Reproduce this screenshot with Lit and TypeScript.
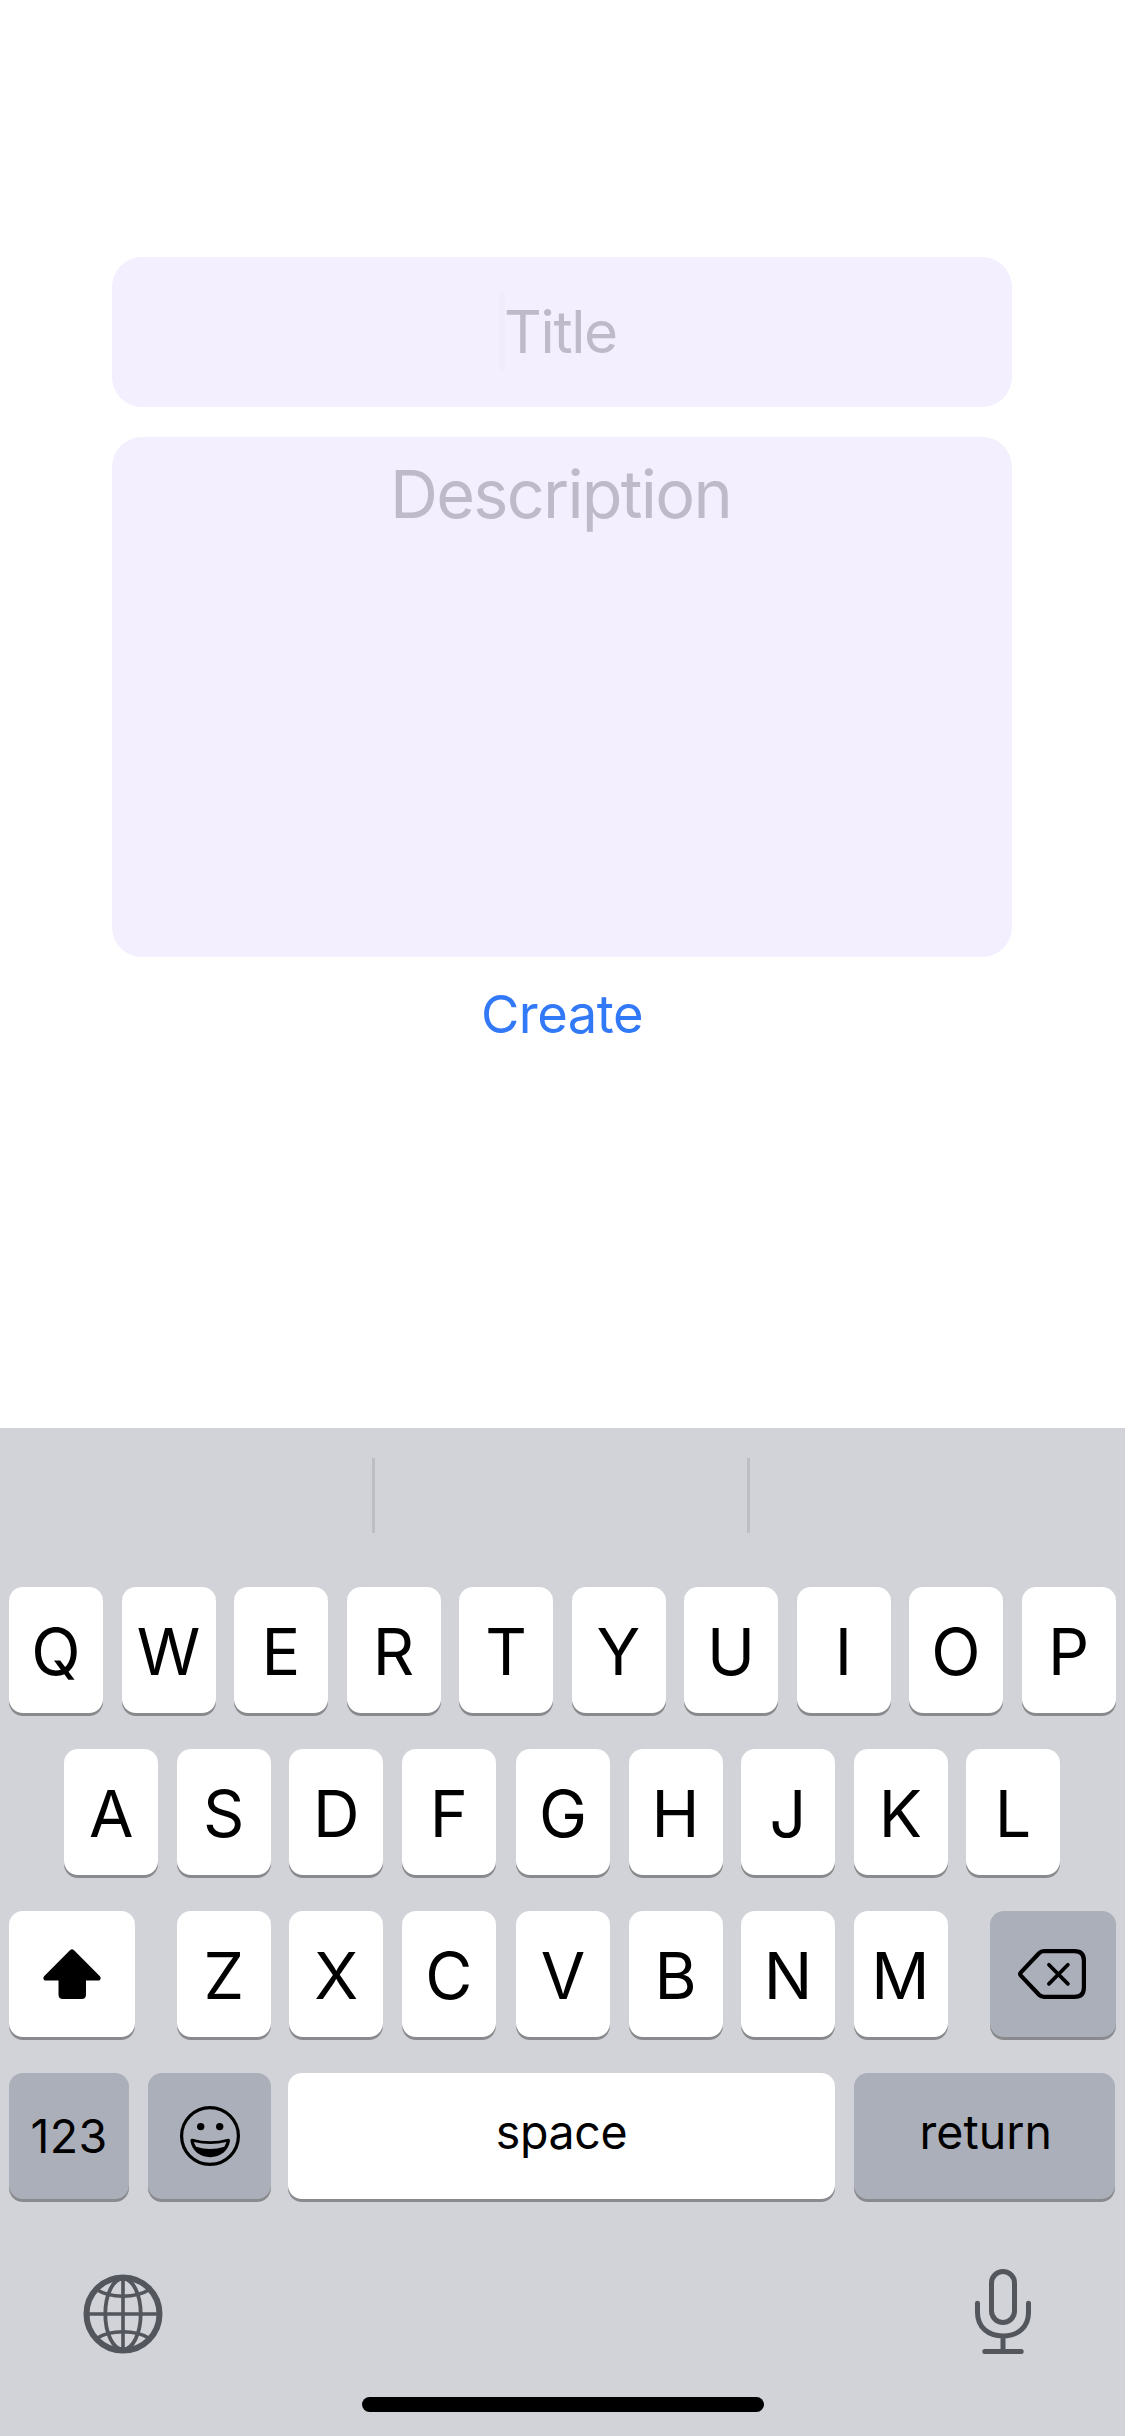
import { LitElement, html, css, svg } from "lit";
import { customElement } from "lit/decorators.js";

const ROW_1 = [..."QWERTYUIOP"];
const ROW_2 = [..."ASDFGHJKL"];
const ROW_3 = [..."ZXCVBNM"];

const INK = "#53565c";

const shiftIcon = html`<svg class="icon" width="58" height="50" viewBox="0 0 58 50">
  ${svg`<path d="M27.2 .9Q29 -.6 30.8 .9L56.9 27.3Q58.6 29.6 56.6 31.2Q56 31.6 55 31.6H43V45.5Q43 50 38.5 50H20Q15.5 50 15.5 45.5V31.6H3Q2 31.6 1.4 31.2Q-.6 29.6 1.1 27.3Z" fill="#000"/>`}
</svg>`;

const deleteIcon = html`<svg class="icon" width="70" height="52" viewBox="0 0 70 52">
  ${svg`<g fill="none" stroke="#000" stroke-linecap="round" stroke-linejoin="round">
    <path stroke-width="4.2" d="M27 3.1H57.5Q66.9 3.1 66.9 12.5V39.5Q66.9 48.9 57.5 48.9H27Q24 48.9 22 46.8L3.9 27.6Q2.4 26 3.9 24.4L22 5.2Q24 3.1 27 3.1Z"/>
    <path stroke-width="3.7" d="M31.9 16.8L50.9 35.9M50.9 16.8L31.9 35.9"/>
  </g>`}
</svg>`;

const emojiIcon = html`<svg class="icon" width="60" height="60" viewBox="0 0 60 60">
  ${svg`<circle cx="30" cy="30" r="28.4" fill="none" stroke="#000" stroke-width="3.2"/>
  <circle cx="20.7" cy="20.6" r="3.7"/><circle cx="39.7" cy="20.6" r="3.7"/>
  <path d="M12.4 32.7Q10.1 32.4 10.4 34.8C11.8 44.6 20 51.2 30.2 51.2S48.6 44.6 50 34.8Q50.2 32.4 48 32.7Q30.2 37.8 12.4 32.7Z"/>
  <path d="M13.9 36Q30.2 40 46.4 36Q45.6 38.6 44.3 40.7Q30.2 45.4 16 40.7Q14.6 38.6 13.9 36Z" fill="#abafba"/>`}
</svg>`;

const globeIcon = html`<svg class="icon" width="80" height="80" viewBox="0 0 80 80">
  ${svg`<g fill="none" stroke=${INK}>
    <circle cx="40" cy="40" r="36.5" stroke-width="6"/>
    <ellipse cx="40" cy="40" rx="17.7" ry="35.5" stroke-width="3.8"/>
    <path stroke-width="3.6" d="M40 3V77M3 40H77"/>
    <path stroke-width="3.4" d="M13.5 15.5Q24 22.2 40 22.2T66.5 15.5M13.5 64.5Q24 57.8 40 57.8T66.5 64.5"/>
  </g>`}
</svg>`;

const micIcon = html`<svg class="icon" width="56" height="85" viewBox="0 0 56 85">
  ${svg`<g fill="none" stroke=${INK} stroke-width="5" stroke-linecap="round">
    <rect x="16.5" y="2.5" width="23" height="51" rx="11.5"/>
    <path d="M2.5 34.2V43.5C2.5 58 13 67 28 67S53.5 58 53.5 43.5V34.2M28 67V82.4M9.8 82.4H46.2"/>
  </g>`}
</svg>`;

@customElement("app-root")
export class AppRoot extends LitElement {
  static styles = css`
    :host {
      display: flex;
      flex-direction: column;
      width: 1125px;
      height: 2436px;
      box-sizing: border-box;
      overflow: hidden;
      background: #fff;
      color: #000;
      font-family: Inter, "Liberation Sans", sans-serif;
    }
    .form {
      height: 1428px;
      box-sizing: border-box;
      padding: 257px 113px 0 112px;
      display: flex;
      flex-direction: column;
      align-items: stretch;
    }
    .field {
      background: #f3effe;
      border-radius: 30px;
      color: #bfbac9;
      text-align: center;
      box-sizing: border-box;
    }
    .title {
      position: relative;
      height: 150px;
      padding-right: 3px;
      line-height: 150px;
      font-size: 58.5px;
      letter-spacing: -1.3px;
    }
    .caret {
      position: absolute;
      left: 387px;
      top: 36px;
      width: 6px;
      height: 77px;
      border-radius: 3px;
      background: #f1ecfc;
    }
    .description {
      height: 520px;
      margin-top: 30px;
      padding: 17px 3px 0 0;
      line-height: 80px;
      font-size: 66.5px;
      letter-spacing: -1.7px;
    }
    .create {
      margin-top: 23px;
      line-height: 68px;
      font-size: 52.5px;
      letter-spacing: -0.5px;
      text-align: center;
      color: #3279f7;
    }
    .keyboard {
      flex: 1;
      background: #d2d3d8;
      display: flex;
      flex-direction: column;
    }
    .suggestions {
      height: 159px;
      box-sizing: border-box;
      padding: 30px 0 54px;
      display: grid;
      grid-template-columns: 372px 3px 372px 3px 1fr;
    }
    .divider {
      background: #bdbec3;
    }
    .rows {
      display: flex;
      flex-direction: column;
      gap: 36px;
      padding: 0 9px;
    }
    .row {
      display: flex;
      gap: 18.5px;
      height: 126px;
    }
    .home-row {
      padding-left: 55.25px;
    }
    .key {
      box-sizing: border-box;
      flex: none;
      width: 94px;
      height: 126px;
      padding-top: 3px;
      border-radius: 14px;
      background: #fff;
      box-shadow: 0 3px 0 #898a8d;
      display: flex;
      align-items: center;
      justify-content: center;
      font-size: 64.5px;
      line-height: 78px;
    }
    .middle {
      margin-left: 1.75px;
    }
    .dark {
      background: #abafba;
    }
    .glyph {
      padding-top: 0;
    }
    .shift {
      width: 126px;
      margin-right: 23.25px;
    }
    .delete {
      width: 126px;
      margin-left: 23.75px;
      padding-right: 2px;
    }
    .numbers {
      width: 120px;
      padding: 0;
      font-size: 46.5px;
      letter-spacing: 0.3px;
    }
    .emoji {
      width: 123px;
      margin-left: 0.5px;
    }
    .space {
      width: 547px;
      margin-left: -1.5px;
      padding: 0;
      font-size: 46.5px;
      letter-spacing: -0.4px;
    }
    .return {
      width: 261.5px;
      padding: 0 0 0 3px;
      font-size: 46.5px;
    }
    .label {
      padding-bottom: 8px;
    }
    .icon {
      display: block;
      flex: none;
    }
    .toolbar {
      display: flex;
      justify-content: space-between;
      align-items: flex-start;
      height: 198px;
      box-sizing: border-box;
      padding: 70px 94px 0 83.4px;
    }
    .globe {
      padding-top: 5.4px;
    }
    .home {
      width: 402px;
      height: 15px;
      margin-left: 362px;
      border-radius: 8px;
      background: #000;
    }
  `;

  private letters(keys: string[], middleIndex = -1) {
    return keys.map(
      (k, i) => html`<div class="key ${i === middleIndex ? "middle" : ""}">${k}</div>`
    );
  }

  render() {
    return html`
      <div class="form">
        <div class="field title"><span class="caret"></span>Title</div>
        <div class="field description">Description</div>
        <div class="create">Create</div>
      </div>
      <div class="keyboard">
        <div class="suggestions">
          <span></span><span class="divider"></span><span></span><span class="divider"></span>
        </div>
        <div class="rows">
          <div class="row">${this.letters(ROW_1)}</div>
          <div class="row home-row">${this.letters(ROW_2, 4)}</div>
          <div class="row">
            <div class="key glyph shift">${shiftIcon}</div>
            ${this.letters(ROW_3, 3)}
            <div class="key glyph dark delete">${deleteIcon}</div>
          </div>
          <div class="row">
            <div class="key dark numbers">123</div>
            <div class="key glyph dark emoji">${emojiIcon}</div>
            <div class="key space"><span class="label">space</span></div>
            <div class="key dark return"><span class="label">return</span></div>
          </div>
        </div>
        <div class="toolbar">
          <div class="globe">${globeIcon}</div>
          ${micIcon}
        </div>
        <div class="home"></div>
      </div>
    `;
  }
}
